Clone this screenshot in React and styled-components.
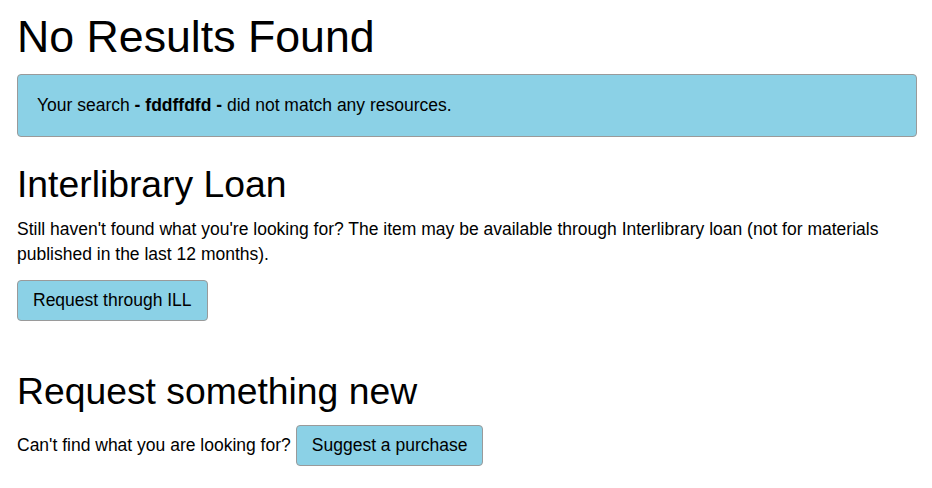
import React from "react";
import styled, { createGlobalStyle } from "styled-components";

const GlobalStyle = createGlobalStyle`
	html,
	body {
		margin: 0;
		padding: 0;
		background: #fff;
	}
	body {
		font-family: "Liberation Sans", Arial, sans-serif;
		font-size: 17.5px;
		line-height: 25px;
		color: #000;
	}
`;

const Page = styled.main`
	padding: 12px 15px 20px 17px;
`;

const Title = styled.h1`
	margin: 0;
	font-size: 44.7px;
	line-height: 49px;
	font-weight: 400;
`;

const Heading = styled.h2`
	margin: ${(props) => props.$top}px 0 0;
	font-size: 37.3px;
	line-height: 41px;
	font-weight: 400;
`;

const Alert = styled.div`
	margin-top: 13px;
	padding: 18px 19px;
	background-color: #8bd1e6;
	border: 1px solid #9a9a9a;
	border-radius: 4px;
`;

const Text = styled.p`
	margin: 12px 0 0;
`;

const Button = styled.button`
	display: inline-block;
	margin: 0;
	padding: 7px 15px;
	font-family: inherit;
	font-size: 17.5px;
	line-height: 25px;
	color: #000;
	background-color: #8bd1e6;
	border: 1px solid #9a9a9a;
	border-radius: 4px;
	cursor: pointer;
`;

const ButtonRow = styled.div`
	margin-top: 13px;
`;

const InlineRow = styled.div`
	display: flex;
	align-items: baseline;
	gap: 5px;
	margin-top: 13.5px;
`;

const App = () => {
	const query = "fddffdfd";

	return (
		<>
			<GlobalStyle />
			<Page>
				<Title>No Results Found</Title>
				<Alert>
					Your search <strong>- {query} -</strong> did not match any resources.
				</Alert>

				<Heading $top={26.5}>Interlibrary Loan</Heading>
				<Text>
					Still haven't found what you're looking for? The item may be available
					through Interlibrary loan (not for materials published in the last 12
					months).
				</Text>
				<ButtonRow>
					<Button type="button">Request through ILL</Button>
				</ButtonRow>

				<Heading $top={50}>Request something new</Heading>
				<InlineRow>
					<span>Can't find what you are looking for?</span>
					<Button type="button">Suggest a purchase</Button>
				</InlineRow>
			</Page>
		</>
	);
};

export default App;
